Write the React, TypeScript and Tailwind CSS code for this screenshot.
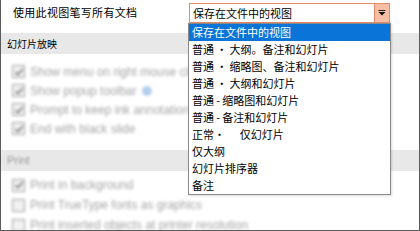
import React from 'react';

const CJK = { fontFamily: '"Noto Sans CJK SC", "Noto Sans", sans-serif' };

const OPTIONS = [
  '保存在文件中的视图',
  '普通\u2009•\u2009大纲。备注和幻灯片',
  '普通\u2009•\u2009缩略图、备注和幻灯片',
  '普通\u2009•\u2009大纲和幻灯片',
  '普通\u2009-\u2009缩略图和幻灯片',
  '普通\u2009-\u2009备注和幻灯片',
  '正常•      仅幻灯片',
  '仅大纲',
  '幻灯片排序器',
  '备注',
];

function Check({ checked }: { checked: boolean }) {
  return (
    <div className="w-[13px] h-[13px] border border-[#a0a0a0] bg-[#f2f2f2] flex items-center justify-center shrink-0">
      {checked && (
        <svg width="10" height="10" viewBox="0 0 10 10">
          <path d="M1.5 5.2 L4 7.6 L8.7 2" fill="none" stroke="#777" strokeWidth="1.6" />
        </svg>
      )}
    </div>
  );
}

function Row({ label, checked, info, h }: { label: string; checked: boolean; info?: boolean; h: string }) {
  return (
    <div className={`flex items-center gap-[5px] pl-[11px] ${h}`}>
      <Check checked={checked} />
      <span className="text-[12px] text-[#a4a4a4] whitespace-nowrap">{label}</span>
      {info && <span className="w-[10px] h-[10px] rounded-full bg-[#b2cdea]" />}
    </div>
  );
}

export default function App() {
  return (
    <div
      className="w-[420px] h-[231px] bg-white border-l border-r border-b border-[#5a5a5a] overflow-hidden relative"
      style={{ fontFamily: '"Liberation Sans", Arial, sans-serif' }}
    >
      {/* top row */}
      <div className="h-[24px] flex items-center" style={CJK}>
        <div className="w-[188px] pl-[12px] text-[11px] text-black tracking-[0.3px]">使用此视图笔写所有文档</div>
        <div className="relative">
          <div className="w-[201px] h-[20px] mt-[1px] border border-[#e48a68] bg-white flex items-stretch">
            <div className="flex-1 pl-[3px] text-[11px] leading-[18px] text-black">保存在文件中的视图</div>
            <div className="w-[15px] bg-[#f6bfa5] border-l border-[#e48a68] flex items-center justify-center">
              <svg width="8" height="6" viewBox="0 0 8 6">
                <rect x="0.5" y="0" width="7" height="1" fill="#222" />
                <path d="M0.5 2 L7.5 2 L4 5.5 Z" fill="#111" />
              </svg>
            </div>
          </div>
          {/* open list */}
          <div className="absolute left-[-1px] top-[21px] w-[203px] border border-[#8a8a8a] bg-white shadow-[1px_1px_2px_rgba(0,0,0,0.15)] z-10">
            {OPTIONS.map((o, i) => (
              <div
                key={o}
                className={`h-[17px] pl-[3px] text-[11px] leading-[17px] whitespace-pre ${
                  i === 0 ? 'bg-[#0a74d8] text-white' : 'text-black'
                }`}
              >
                {o}
              </div>
            ))}
          </div>
        </div>
      </div>

      <div className="mt-[9px] h-[21px] bg-[#e8e8e8] flex items-center pl-[6px] text-[10px] text-black" style={CJK}>
        幻灯片放映
      </div>

      <div className="pt-[8px] blur-[1.5px]">
        <Row h="h-[19px]" checked label="Show menu on right mouse click" info />
        <Row h="h-[19px]" checked label="Show popup toolbar" info />
        <Row h="h-[19px]" checked label="Prompt to keep ink annotations when exiting" />
        <Row h="h-[19px]" checked label="End with black slide" />
      </div>

      <div className="mt-[12px] h-[21px] bg-[#e8e8e8] flex items-center pl-[6px]">
        <span className="text-[11px] text-[#9a9a9a] blur-[1.3px]">Print</span>
      </div>

      <div className="pt-[4px] blur-[1.5px]">
        <Row h="h-[20px]" checked label="Print in background" />
        <Row h="h-[20px]" checked={false} label="Print TrueType fonts as graphics" />
        <Row h="h-[20px]" checked={false} label="Print inserted objects at printer resolution" />
      </div>
    </div>
  );
}
